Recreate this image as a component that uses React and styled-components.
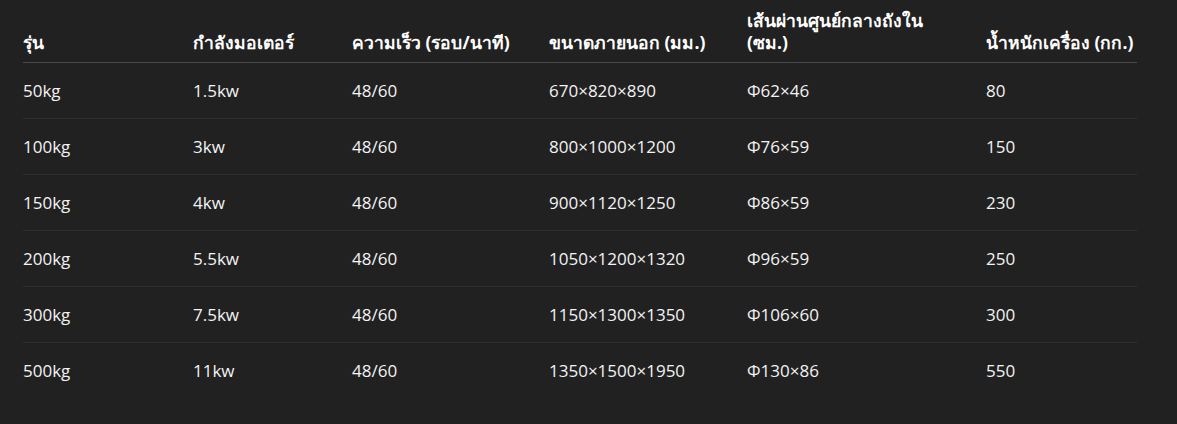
import React from "react";
import styled, { createGlobalStyle } from "styled-components";

const Global = createGlobalStyle`
  html, body { margin: 0; padding: 0; background: #212121; }
  body { font-family: "Open Sans", "Noto Sans", "DejaVu Sans", sans-serif; color: #ececec; }
  *, *::before, *::after { box-sizing: border-box; }
`;

const Wrap = styled.div`
  padding: 9px 40px 0 23px;
`;

const Table = styled.table`
  width: 1114px;
  border-collapse: collapse;
  table-layout: fixed;
`;

const Th = styled.th`
  text-align: left;
  vertical-align: bottom;
  font-size: 17.5px;
  font-weight: 700;
  color: #fff;
  line-height: 22px;
  padding: 0 4px 9px 0;
  border-bottom: 1px solid #4a4a4a;
  width: ${(p) => p.$w}px;
  white-space: nowrap;
`;

const Td = styled.td`
  height: 56px;
  padding: 0 4px 0 0;
  vertical-align: middle;
  font-size: 17px;
  line-height: 24px;
  color: #f3f3f3;
  border-bottom: 1px solid ${(p) => (p.$last ? "transparent" : "#2f2f2f")};
`;

const cols = [
  { label: "รุ่น", w: 170 },
  { label: "กำลังมอเตอร์", w: 159 },
  { label: "ความเร็ว (รอบ/นาที)", w: 197 },
  { label: "ขนาดภายนอก (มม.)", w: 198 },
  { label: "เส้นผ่านศูนย์กลางถังใน (ซม.)", w: 239 },
  { label: "น้ำหนักเครื่อง (กก.)", w: 151 },
];

const rows = [
  ["50kg", "1.5kw", "48/60", "670×820×890", "Φ62×46", "80"],
  ["100kg", "3kw", "48/60", "800×1000×1200", "Φ76×59", "150"],
  ["150kg", "4kw", "48/60", "900×1120×1250", "Φ86×59", "230"],
  ["200kg", "5.5kw", "48/60", "1050×1200×1320", "Φ96×59", "250"],
  ["300kg", "7.5kw", "48/60", "1150×1300×1350", "Φ106×60", "300"],
  ["500kg", "11kw", "48/60", "1350×1500×1950", "Φ130×86", "550"],
];

export default function App() {
  return (
    <>
      <Global />
      <Wrap>
        <Table>
          <thead>
            <tr>
              {cols.map((c) => (
                <Th key={c.label} $w={c.w}>
                  {c.label === "เส้นผ่านศูนย์กลางถังใน (ซม.)" ? (
                    <>
                      เส้นผ่านศูนย์กลางถังใน
                      <br />
                      (ซม.)
                    </>
                  ) : (
                    c.label
                  )}
                </Th>
              ))}
            </tr>
          </thead>
          <tbody>
            {rows.map((r, i) => (
              <tr key={r[0]}>
                {r.map((v, j) => (
                  <Td key={j} $last={i === rows.length - 1}>
                    {v}
                  </Td>
                ))}
              </tr>
            ))}
          </tbody>
        </Table>
      </Wrap>
    </>
  );
}
